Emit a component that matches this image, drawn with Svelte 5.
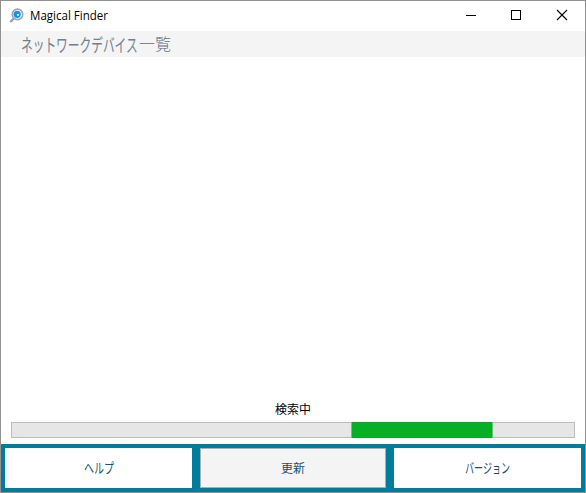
<script>
  const progress = { start: 339, width: 142 };
  const actions = [
    { id: 'help', label: 'ヘルプ', width: 30, size: 14 },
    { id: 'refresh', label: '更新', width: 24, size: 12.5, active: true },
    { id: 'version', label: 'バージョン', width: 45, size: 14 }
  ];
</script>

<div class="window">
  <header class="titlebar">
    <svg class="logo" width="16" height="16" viewBox="0 0 16 16">
      <path d="M4.8 10.6 1.2 14" stroke="#9b9ca4" stroke-width="2.2" />
      <circle cx="8.5" cy="6.4" r="5.2" fill="#fff" stroke="#a2a3ac" stroke-width="1.7" />
      <circle cx="8.2" cy="6.3" r="3.6" fill="#0a95fa" />
      <circle cx="9" cy="6.9" r="1.1" fill="#e4f7ff" />
    </svg>
    <svg class="title" width="80" height="20">
      <text x="0" y="12" textLength="78" lengthAdjust="spacingAndGlyphs">Magical Finder</text>
    </svg>
    <div class="controls">
      <button aria-label="Minimize"><svg width="10" height="10" shape-rendering="crispEdges"><path d="M0 5h10v1H0z" /></svg></button>
      <button aria-label="Maximize"><svg width="10" height="10" shape-rendering="crispEdges"><path d="M.5.5h9v9h-9z" fill="none" stroke="#000" /></svg></button>
      <button aria-label="Close"><svg width="10" height="10"><path d="m0 0 10 10m0-10L0 10" fill="none" stroke="#000" stroke-width="1.1" /></svg></button>
    </div>
  </header>

  <h1>
    <span class="kana"><span class="condensed">ネットワークデバイス</span></span>
    <span class="kanji">一覧</span>
  </h1>

  <main></main>

  <section class="status">
    <div class="message">検索中</div>
    <div class="track">
      <div class="bar" style="margin-left: {progress.start}px; width: {progress.width}px"></div>
    </div>
  </section>

  <footer>
    {#each actions as action (action.id)}
      <button class="action" class:active={action.active}>
        <svg width={action.width} height="18">
          <text x="0" y="14" font-size={action.size} textLength={action.width} lengthAdjust="spacingAndGlyphs">{action.label}</text>
        </svg>
      </button>
    {/each}
  </footer>
</div>

<style>
  .window {
    box-sizing: border-box;
    width: 586px;
    height: 493px;
    display: flex;
    flex-direction: column;
    border: 1px solid #929292;
    background: #fff;
    font-family: "Noto Sans CJK JP", sans-serif;
  }
  svg { display: block; overflow: visible; }
  button {
    padding: 0;
    border: 0;
    background: none;
    font: inherit;
    display: flex;
    align-items: center;
    justify-content: center;
  }
  .titlebar {
    height: 30px;
    flex: none;
    display: flex;
    align-items: center;
    padding-left: 8px;
  }
  .title {
    margin-left: 5px;
    margin-top: 3px;
    font-family: "Open Sans", "Noto Sans", sans-serif;
    font-size: 12px;
  }
  .controls { display: flex; align-self: flex-start; margin-left: auto; height: 28px; }
  .controls button { width: 45px; }
  .controls button:last-child { width: 47px; }
  h1 {
    height: 26px;
    flex: none;
    display: flex;
    margin: 0;
    padding-left: 20px;
    background: #f4f4f4;
    font-size: 18px;
    line-height: 26px;
    font-weight: 400;
    color: #708090;
  }
  .kana { width: 118px; white-space: nowrap; }
  .condensed {
    display: inline-block;
    transform: scaleX(0.65);
    transform-origin: left;
  }
  .kanji {
    font-size: 16px;
    line-height: 24px;
    font-weight: 300;
    color: #5d6e80;
  }
  main { flex: 1; }
  .status { padding: 0 10px 6px; }
  .message {
    height: 21px;
    line-height: 16px;
    font-size: 12px;
    text-align: center;
    color: #000;
  }
  .track {
    box-sizing: border-box;
    display: flex;
    height: 16px;
    border: 1px solid #bcbcbc;
    background: #e6e6e6;
  }
  .bar {
    box-sizing: border-box;
    height: 16px;
    margin-top: -1px;
    border: solid #67c878;
    border-width: 0 1px;
    background: #06b025;
  }
  footer {
    box-sizing: border-box;
    height: 48px;
    flex: none;
    display: grid;
    grid-template-columns: 187px 186px 187px;
    gap: 8px;
    padding: 4px;
    background: #007d9a;
  }
  .action { background: #fff; }
  .action text { fill: #174f70; }
  .active { border: 1px solid #adadad; background: #f4f4f4; }
</style>
